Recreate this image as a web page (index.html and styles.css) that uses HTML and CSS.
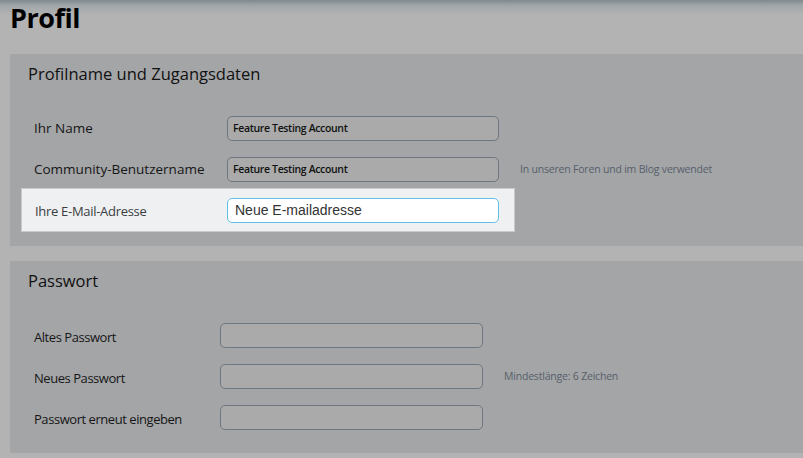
FILE: index.html
```html
<!DOCTYPE html>
<html lang="de">
<head>
<meta charset="utf-8">
<title>Profil</title>
<link rel="stylesheet" href="styles.css">
</head>
<body>
<div class="page">
  <h1 class="title">Profil</h1>

  <section class="panel panel-account">
    <h2 class="panel-title">Profilname und Zugangsdaten</h2>
    <div class="row">
      <label class="label">Ihr Name</label>
      <div class="input input-filled">Feature Testing Account</div>
    </div>
    <div class="row">
      <label class="label">Community-Benutzername</label>
      <div class="input input-filled">Feature Testing Account</div>
      <span class="hint">In unseren Foren und im Blog verwendet</span>
    </div>
    <div class="row row-focus">
      <label class="label label-focus">Ihre E-Mail-Adresse</label>
      <div class="input input-focus">Neue E-mailadresse</div>
    </div>
  </section>

  <section class="panel panel-password">
    <h2 class="panel-title">Passwort</h2>
    <div class="row">
      <label class="label">Altes Passwort</label>
      <div class="input"></div>
    </div>
    <div class="row">
      <label class="label">Neues Passwort</label>
      <div class="input"></div>
      <span class="hint">Mindestlänge: 6 Zeichen</span>
    </div>
    <div class="row">
      <label class="label">Passwort erneut eingeben</label>
      <div class="input"></div>
    </div>
  </section>
</div>
</body>
</html>
```

FILE: styles.css
```css
html, body {
  margin: 0;
  padding: 0;
}
body {
  background: linear-gradient(to bottom, #7d8990 0px, #a2a8aa 6px, #b3b3b3 16px, #b3b3b3 100%);
  font-family: "Open Sans", "Noto Sans", sans-serif;
  color: #141414;
  height: 458px;
  overflow: hidden;
}
.page {
  padding: 0 0 0 10px;
}
.title {
  margin: 0;
  padding-top: 1px;
  height: 53px;
  font-size: 27px;
  font-weight: 700;
  line-height: 34px;
  letter-spacing: -0.5px;
  color: #000;
}
.panel {
  background: #a4a5a7;
}
.panel-account {
  height: 192px;
}
.panel-password {
  margin-top: 15px;
  height: 192px;
}
.panel-title {
  margin: 0;
  padding: 8px 0 0 18px;
  font-size: 16.5px;
  font-weight: 400;
  line-height: 24px;
  height: 53.5px;
  box-sizing: border-box;
  color: #111;
}
.row {
  display: flex;
  align-items: center;
  height: 41px;
  margin-left: 11px;
  padding-left: 13px;
}
.label {
  width: 193px;
  flex: none;
  font-size: 13.5px;
  color: #161616;
}
.panel-password .label {
  width: 186px;
  font-size: 13px;
  letter-spacing: -0.45px;
  padding-top: 3px;
}
.input {
  flex: none;
  box-sizing: border-box;
  width: 272px;
  height: 25px;
  border: 1.5px solid #6d7783;
  border-radius: 5px;
  background: #a9aaa9;
  font-size: 10.5px;
  font-weight: 600;
  line-height: 22px;
  padding-left: 5px;
  color: #111;
  letter-spacing: -0.35px;
}
.panel-password .input {
  width: 263px;
}
.hint {
  margin-left: 21px;
  font-size: 10.5px;
  letter-spacing: -0.2px;
  color: #56606b;
}
.row-focus {
  box-sizing: border-box;
  width: 494px;
  height: 44px;
  margin-top: -1.5px;
  background: #eff0f2;
  border: 1px solid #c9cacc;
}
.row-focus .label {
  width: 192px;
  font-size: 13px;
  letter-spacing: -0.3px;
  padding-top: 2px;
}
.label-focus {
  color: #3a3d42;
}
.input-focus {
  background: #fff;
  border: 1.5px solid #62bfe6;
  font-family: "Liberation Sans", Arial, sans-serif;
  font-weight: 400;
  font-size: 14px;
  color: #333;
  padding-left: 7px;
  letter-spacing: 0;
}
```
